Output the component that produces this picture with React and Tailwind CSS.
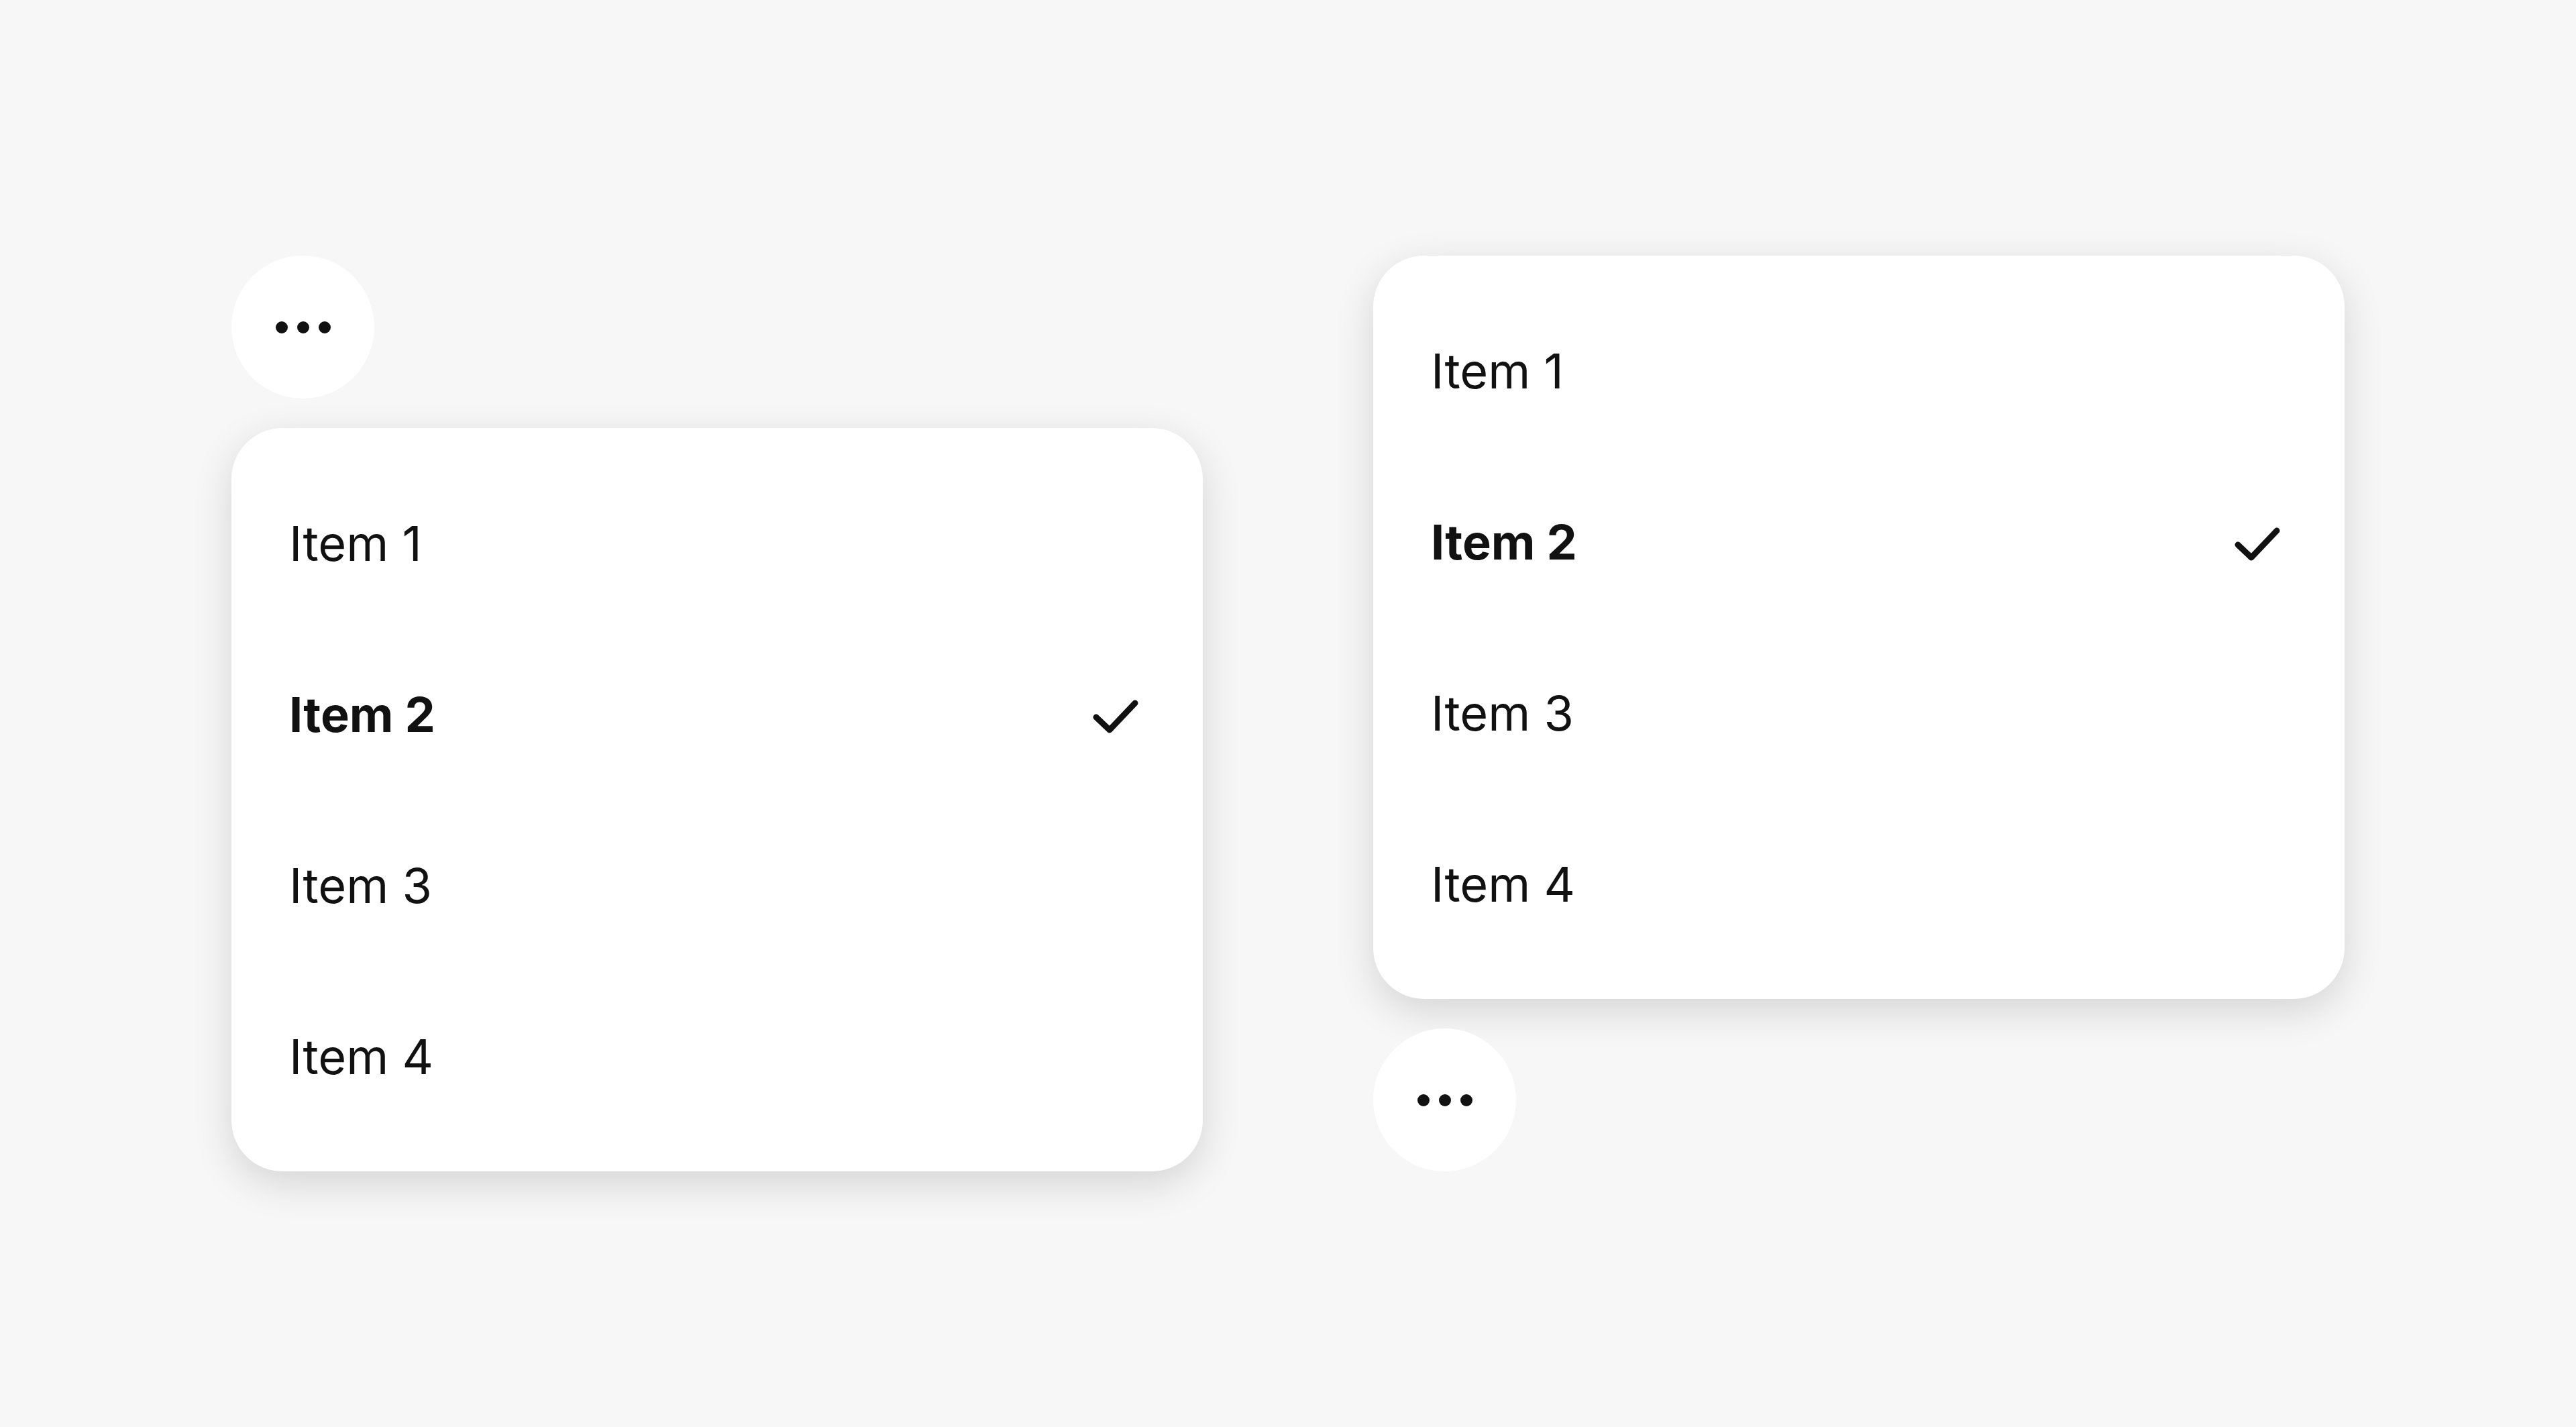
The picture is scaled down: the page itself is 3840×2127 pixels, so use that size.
const items = ['Item 1', 'Item 2', 'Item 3', 'Item 4'];

function MoreButton() {
  return (
    <button className="flex h-[213px] w-[213px] items-center justify-center gap-[14px] rounded-full bg-white">
      <span className="h-[18px] w-[18px] rounded-full bg-[#111]" />
      <span className="h-[18px] w-[18px] rounded-full bg-[#111]" />
      <span className="h-[18px] w-[18px] rounded-full bg-[#111]" />
    </button>
  );
}

function Check() {
  return (
    <svg width="68" height="52" viewBox="0 0 68 52" fill="none" className="translate-y-[3px]">
      <polyline points="5,27 25,46 63,6" stroke="#111" strokeWidth="9" strokeLinecap="round" strokeLinejoin="round" />
    </svg>
  );
}

function Menu({ selected = 1 }) {
  return (
    <div className="w-[1448px] rounded-[76px] bg-white py-[44px] pl-[86px] pr-[96px] shadow-[0_18px_60px_rgba(0,0,0,0.14)]">
      {items.map((item, i) => (
        <div key={item} className="flex h-[255px] items-center justify-between">
          <span className={`text-[72px] leading-none text-[#111] ${i === selected ? 'font-bold' : 'font-normal'}`}>
            {item}
          </span>
          {i === selected && <Check />}
        </div>
      ))}
    </div>
  );
}

export default function App() {
  return (
    <main
      className="flex h-screen w-full items-center justify-center gap-[254px] bg-[#f7f7f7]"
      style={{ fontFamily: 'Inter, "Noto Sans", sans-serif' }}
    >
      {/* menu opening downward */}
      <div className="flex flex-col items-start gap-[44px]">
        <MoreButton />
        <Menu />
      </div>

      {/* menu opening upward */}
      <div className="flex flex-col items-start gap-[44px]">
        <Menu />
        <MoreButton />
      </div>
    </main>
  );
}
